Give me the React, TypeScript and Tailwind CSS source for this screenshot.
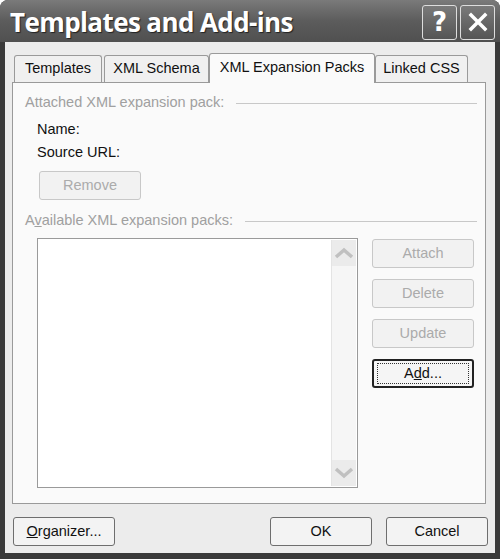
import React from "react";

const font = { fontFamily: "'Liberation Sans', Arial, sans-serif" };

function Btn({ children, disabled, focus, className = "" }: { children: React.ReactNode; disabled?: boolean; focus?: boolean; className?: string }) {
  return (
    <div
      className={`flex items-center justify-center h-[29px] w-[102px] rounded-[3px] border text-[14.5px] ${
        disabled ? "border-[#c8c8c8] text-[#ababab] bg-[#f2f2f2]" : focus ? "border-[#222] border-2 text-[#111] bg-[#f5f5f5]" : "border-[#6e6e6e] text-[#111] bg-[#f3f3f3]"
      } ${className}`}
    >
      {focus ? (
        <div className="border border-dotted border-[#333] w-[92px] h-[21px] flex items-center justify-center">{children}</div>
      ) : (
        children
      )}
    </div>
  );
}

export default function App() {
  return (
    <div className="w-[500px] h-[559px] bg-[#3a3a3a] rounded-t-[8px] flex flex-col" style={font}>
      {/* title bar */}
      <div className="h-[42px] flex items-center justify-between pl-[10px] pr-[5px] rounded-t-[8px] bg-gradient-to-b from-[#7a7a7a] via-[#5c5c5c] to-[#505050]">
        <div className="text-white text-[26px] font-bold leading-none tracking-[-0.6px] mt-[2px]" style={{ fontFamily: "'Open Sans', 'DejaVu Sans', sans-serif", textShadow: "1px 1px 1px #222" }}>
          Templates and Add-ins
        </div>
        <div className="flex gap-[3px] mt-[2px]">
          <div className="w-[35px] h-[35px] rounded-[3px] border border-[#ddd] bg-gradient-to-b from-[#7a7a7a] to-[#555] flex items-center justify-center text-white text-[26px] font-bold" style={{ fontFamily: "'DejaVu Sans', sans-serif" }}>?</div>
          <div className="w-[35px] h-[35px] rounded-[3px] border border-[#ddd] bg-gradient-to-b from-[#7a7a7a] to-[#555] flex items-center justify-center">
            <svg width="20" height="20" viewBox="0 0 20 20"><path d="M3 3 L17 17 M17 3 L3 17" stroke="white" strokeWidth="3.5" strokeLinecap="square" /></svg>
          </div>
        </div>
      </div>
      {/* client */}
      <div className="flex-1 mx-[5px] mb-[6px] bg-[#ececec] flex flex-col px-[7px] pt-[11px]">
        {/* tabs */}
        <div className="flex items-end h-[29px] pl-[2px] text-[14.5px] text-[#111]">
          <div className="h-[27px] w-[88px] border border-b-0 border-[#9a9a9a] rounded-t-[3px] bg-[#f0f0f0] flex items-center justify-center">Templates</div>
          <div className="h-[27px] w-[105px] ml-[2px] border border-b-0 border-[#9a9a9a] rounded-t-[3px] bg-[#f0f0f0] flex items-center justify-center">XML Schema</div>
          <div className="h-[30px] w-[166px] border border-b-0 border-[#9a9a9a] rounded-t-[3px] bg-[#fafafa] flex items-center justify-center relative z-10 -mb-[1px] pb-[1px]">XML Expansion Packs</div>
          <div className="h-[27px] w-[93px] border border-b-0 border-[#9a9a9a] rounded-t-[3px] bg-[#f0f0f0] flex items-center justify-center">Linked CSS</div>
        </div>
        <div className="h-[422px] w-[474px] border border-[#9a9a9a] bg-[#fafafa] flex flex-col pl-[12px] pr-[8px] pt-[10px] text-[14.5px]">
          <div className="flex items-center gap-[12px] text-[#a0a0a0] h-[20px]">
            <span>Attached XML expansion pack:</span>
            <div className="flex-1 h-px bg-[#c8c8c8]" />
          </div>
          <div className="pl-[12px] text-[#111] mt-[5px] leading-[23px]">
            <div>Name:</div>
            <div>Source URL:</div>
          </div>
          <Btn disabled className="ml-[14px] mt-[7px]">Remove</Btn>
          <div className="flex items-center gap-[12px] text-[#a0a0a0] h-[20px] mt-[11px]">
            <span>A<span className="underline">v</span>ailable XML expansion packs:</span>
            <div className="flex-1 h-px bg-[#c8c8c8]" />
          </div>
          <div className="flex mt-[7px] pl-[12px]">
            <div className="w-[321px] h-[250px] border border-[#9a9a9a] bg-white flex justify-end p-[1px]">
              <div className="w-[25px] bg-[#f6f6f6] border-l border-[#e4e4e4] flex flex-col justify-between">
                <div className="h-[26px] bg-[#ebebeb] flex items-center justify-center">
                  <svg width="20" height="12" viewBox="0 0 20 12"><path d="M2 10 L10 3 L18 10" stroke="#c0c0c0" strokeWidth="3.5" fill="none" /></svg>
                </div>
                <div className="h-[26px] bg-[#ebebeb] flex items-center justify-center">
                  <svg width="20" height="12" viewBox="0 0 20 12"><path d="M2 2 L10 9 L18 2" stroke="#c0c0c0" strokeWidth="3.5" fill="none" /></svg>
                </div>
              </div>
            </div>
            <div className="flex flex-col gap-[11px] ml-[14px] mt-[1px]">
              <Btn disabled>Attach</Btn>
              <Btn disabled>Delete</Btn>
              <Btn disabled>Update</Btn>
              <Btn focus>A<span className="underline">d</span>d...</Btn>
            </div>
          </div>
        </div>
        <div className="flex items-center mt-[13px]">
          <Btn className="ml-[1px]"><span><span className="underline">O</span>rganizer...</span></Btn>
          <div className="flex-1" />
          <Btn>OK</Btn>
          <Btn className="ml-[14px]">Cancel</Btn>
        </div>
      </div>
    </div>
  );
}
